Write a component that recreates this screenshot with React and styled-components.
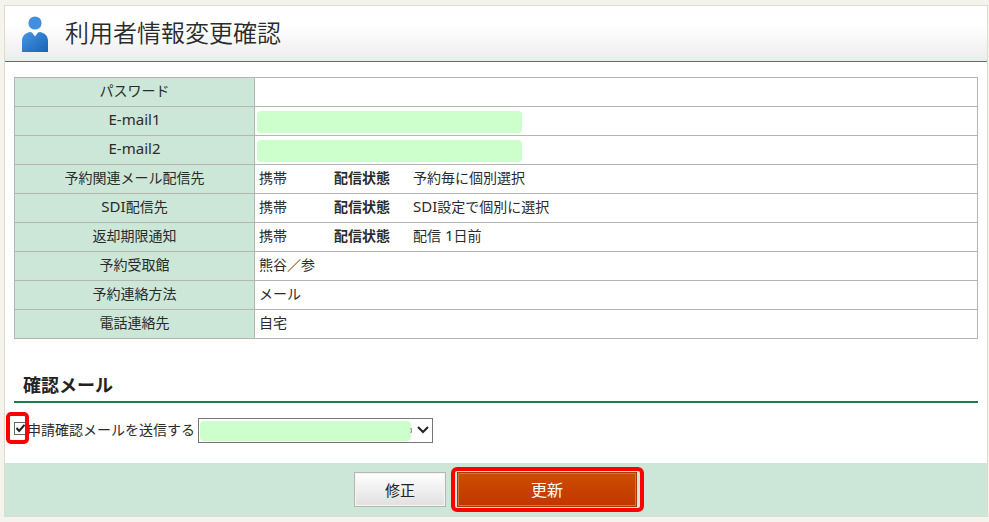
import React from "react";
import styled, { createGlobalStyle } from "styled-components";

const GlobalStyle = createGlobalStyle`
  *, *::before, *::after { box-sizing: border-box; }
  body {
    margin: 0;
    background: #f5f4ec;
    color: #2b2b2b;
    font: 14px/20px "Noto Sans CJK JP", "Noto Sans", sans-serif;
  }
`;

const Panel = styled.main`
  margin: 5px 1px 5px 4px;
  background: #fff;
  border: 1px solid #dddccf;
`;

const Header = styled.header`
  display: flex;
  align-items: center;
  gap: 16px;
  height: 56px;
  padding: 0 16px;
  background: linear-gradient(#fff 35%, #ececec);
  border-bottom: 1px solid #2a8a60;
`;

const Title = styled.h1`
  margin: 0;
  padding-bottom: 4px;
  font-size: 24px;
  line-height: 32px;
  font-weight: 350;
`;

const Content = styled.div`
  padding: 15px 9px 20px;
`;

const Table = styled.table`
  width: 100%;
  border-collapse: collapse;
  table-layout: fixed;
`;

const LabelCell = styled.th`
  width: 240px;
  height: 29px;
  padding: 0 0 4px;
  border: 1px solid #b5b5b5;
  background: #cce6d8;
  font-weight: 400;
  text-align: center;
`;

const ValueCell = styled.td`
  height: 29px;
  padding: 0 4px 4px;
  border: 1px solid #b5b5b5;
`;

const MaskCell = styled(ValueCell)`
  padding: 4px 2px 2px;
`;

const Latin = styled.span`
  font-family: "Noto Sans", sans-serif;
  font-size: 15px;
`;

const Delivery = styled.div`
  display: grid;
  grid-template-columns: 75px 79px 1fr;
`;

const Mask = styled.div`
  width: 265px;
  height: 22px;
  border-radius: 4px;
  background: #ccffcc;
`;

const SectionTitle = styled.h2`
  margin: 31px 0 15px;
  padding: 0 9px 3px;
  border-bottom: 2px solid #14814c;
  font-size: 18px;
  line-height: 28px;
  font-weight: 700;
  color: #222;
`;

const MailRow = styled.div`
  display: flex;
  align-items: center;
`;

const CheckWrap = styled.span`
  position: relative;
  display: flex;
  width: 13px;
  height: 13px;
  margin-bottom: 4px;

  &::after {
    content: "";
    position: absolute;
    inset: -10px -2px -9px -8px;
    border: 4px solid #f00;
    border-radius: 5px;
    pointer-events: none;
  }
`;

const Checkbox = styled.input`
  appearance: none;
  width: 13px;
  height: 13px;
  margin: 0;
  border: 1px solid #666;
  background: #fff;
`;

const CheckMark = styled.svg`
  position: absolute;
  inset: 0;
  pointer-events: none;
`;

const MailLabel = styled.label`
  margin-right: 3px;
  padding-bottom: 4px;
`;

const SelectWrap = styled.div`
  position: relative;
  width: 235px;
  height: 25px;
`;

const Select = styled.select`
  appearance: none;
  width: 100%;
  height: 100%;
  border: 1px solid #777;
  border-radius: 0;
  background: #fff;
`;

const SelectMask = styled.span`
  position: absolute;
  top: 3px;
  left: 2px;
  right: 22px;
  height: 20px;
  border-radius: 4px;
  background: #ccffcc;
  pointer-events: none;
`;

const Chevron = styled.svg`
  position: absolute;
  top: 7px;
  right: 3px;
  pointer-events: none;
`;

const Actions = styled.footer`
  display: flex;
  justify-content: center;
  align-items: center;
  gap: 5px;
  padding: 4px 0 4px 6px;
  background: #cce6d8;
`;

const EditButton = styled.button`
  width: 92px;
  height: 35px;
  padding: 0;
  border: 1px solid #b5b5b5;
  background: linear-gradient(#fff, #e0e0e0);
  box-shadow: inset 0 0 0 1px #f5f5f5;
  color: #222;
  font: 15px/22px "Noto Sans CJK JP", sans-serif;
`;

const Highlight = styled.div`
  padding: 1px 3px 1px 2px;
  border: 4px solid #f00;
  border-radius: 6px;
`;

const UpdateButton = styled.button`
  display: block;
  width: 180px;
  height: 35px;
  padding: 0 0 2px;
  border: 1px solid #a83a04;
  background: linear-gradient(#cc4e00, #c23600);
  box-shadow: inset 0 0 0 1px #d9703a;
  color: #fff;
  font: 16px/24px "Noto Sans CJK JP", sans-serif;
`;

function UserIcon() {
  return (
    <svg width="28" height="38" viewBox="0 0 28 38" aria-hidden="true">
      <defs>
        <linearGradient id="person" x1="0" y1="0" x2="1" y2="1">
          <stop offset="0" stopColor="#4796e3" />
          <stop offset="1" stopColor="#1763b5" />
        </linearGradient>
      </defs>
      <circle cx="14" cy="8" r="6.6" fill="#438fde" />
      <path
        d="M1 37V26C1 21 4 18 9 17L11 17.500L14 21.500L17 17.500L19 17C24 18 27 21 27 26V37Z"
        fill="url(#person)"
      />
    </svg>
  );
}

const rows = [
  { label: "パスワード" },
  { label: <Latin>E-mail1</Latin>, masked: true },
  { label: <Latin>E-mail2</Latin>, masked: true },
  { label: "予約関連メール配信先", value: "携帯", status: "予約毎に個別選択" },
  {
    label: <><Latin>SDI</Latin>配信先</>,
    value: "携帯",
    status: <><Latin>SDI</Latin>設定で個別に選択</>,
  },
  {
    label: "返却期限通知",
    value: "携帯",
    status: <>配信<Latin> 1</Latin>日前</>,
  },
  { label: "予約受取館", value: "熊谷／参" },
  { label: "予約連絡方法", value: "メール" },
  { label: "電話連絡先", value: "自宅" },
];

function InfoRow({ label, value, status, masked }) {
  return (
    <tr>
      <LabelCell scope="row">{label}</LabelCell>
      {masked ? (
        <MaskCell><Mask /></MaskCell>
      ) : (
        <ValueCell>
          {status ? (
            <Delivery>
              <span>{value}</span>
              <strong>配信状態</strong>
              <span>{status}</span>
            </Delivery>
          ) : (
            value
          )}
        </ValueCell>
      )}
    </tr>
  );
}

export default function App() {
  return (
    <>
      <GlobalStyle />
      <Panel>
        <Header>
          <UserIcon />
          <Title>利用者情報変更確認</Title>
        </Header>
        <Content>
          <Table>
            <tbody>
              {rows.map((row, i) => <InfoRow key={i} {...row} />)}
            </tbody>
          </Table>
          <SectionTitle>確認メール</SectionTitle>
          <MailRow>
            <CheckWrap>
              <Checkbox type="checkbox" id="send-mail" defaultChecked />
              <CheckMark width="13" height="13" viewBox="0 0 13 13">
                <path d="M2.5 6L5.2 9L10.5 2.8" fill="none" stroke="#222" strokeWidth="2" />
              </CheckMark>
            </CheckWrap>
            <MailLabel htmlFor="send-mail">申請確認メールを送信する</MailLabel>
            <SelectWrap>
              <Select aria-label="送信先">
                <option aria-label="E-mail1" />
              </Select>
              <SelectMask />
              <Chevron width="20" height="12" viewBox="0 0 20 12">
                <path d="M1 3Q2 5.500 1 8" fill="none" stroke="#777" />
                <path d="M8 2L13 7L18 2" fill="none" stroke="#222" strokeWidth="2" />
              </Chevron>
            </SelectWrap>
          </MailRow>
        </Content>
        <Actions>
          <EditButton type="button">修正</EditButton>
          <Highlight>
            <UpdateButton type="submit">更新</UpdateButton>
          </Highlight>
        </Actions>
      </Panel>
    </>
  );
}
